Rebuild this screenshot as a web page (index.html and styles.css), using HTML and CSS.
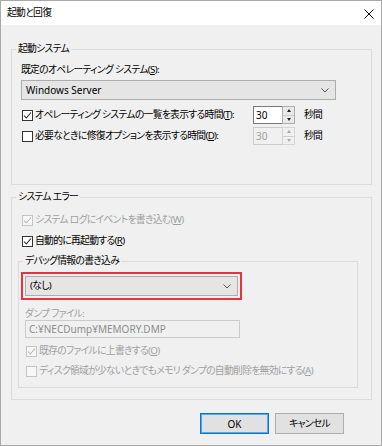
FILE: index.html
```html
<!DOCTYPE html>
<html lang="ja">
<head>
    <meta charset="UTF-8">
    <title>起動と回復</title>
    <link rel="stylesheet" href="styles.css">
</head>
<body>
    <div class="window">
        <div class="titlebar">
            <span class="title">起動と回復</span>
            <svg class="close" width="10" height="10" viewBox="0 0 10 10">
                <path d="M0.5 0.5 L9.5 9.5 M9.5 0.5 L0.5 9.5" stroke="#000" stroke-width="1" fill="none"/>
            </svg>
        </div>

        <div class="content">
            <fieldset class="group group-startup">
                <legend>起動システム</legend>
                <div class="label">既定のオペレーティング システム(<u>S</u>):</div>
                <div class="select select-os">
                    <span class="latin">Windows Server</span>
                    <svg width="8" height="5" viewBox="0 0 8 5"><path d="M0.5 0.5 L4 4 L7.5 0.5" stroke="#555" fill="none"/></svg>
                </div>

                <div class="row row-first">
                    <div class="check check-wide">
                        <span class="box"><svg width="9" height="9" viewBox="0 0 9 9"><path d="M1 4.5 L3.3 7 L8 1.5" stroke="#222" stroke-width="1.1" fill="none"/></svg></span>
                        オペレーティング システムの一覧を表示する時間(<u>T</u>):
                    </div>
                    <div class="spin">
                        <span class="spin-value latin">30</span>
                        <span class="spin-buttons"><span class="up"></span><span class="down"></span></span>
                    </div>
                    <span class="unit">秒間</span>
                </div>

                <div class="row">
                    <div class="check check-wide">
                        <span class="box"></span>
                        必要なときに修復オプションを表示する時間(<u>D</u>):
                    </div>
                    <div class="spin disabled">
                        <span class="spin-value latin">30</span>
                        <span class="spin-buttons"><span class="up"></span><span class="down"></span></span>
                    </div>
                    <span class="unit">秒間</span>
                </div>
            </fieldset>

            <fieldset class="group group-error">
                <legend>システム エラー</legend>
                <div class="check disabled">
                    <span class="box"><svg width="9" height="9" viewBox="0 0 9 9"><path d="M1 4.5 L3.3 7 L8 1.5" stroke="#b5b5b5" stroke-width="1.1" fill="none"/></svg></span>
                    システム ログにイベントを書き込む(<u>W</u>)
                </div>
                <div class="check check-restart">
                    <span class="box"><svg width="9" height="9" viewBox="0 0 9 9"><path d="M1 4.5 L3.3 7 L8 1.5" stroke="#222" stroke-width="1.1" fill="none"/></svg></span>
                    自動的に再起動する(<u>R</u>)
                </div>

                <fieldset class="group group-debug">
                    <legend>デバッグ情報の書き込み</legend>
                    <div class="highlight">
                        <div class="select">
                            <span>(なし)</span>
                            <svg width="8" height="5" viewBox="0 0 8 5"><path d="M0.5 0.5 L4 4 L7.5 0.5" stroke="#555" fill="none"/></svg>
                        </div>
                    </div>
                    <div class="label dump-label disabled">ダンプ ファイル:</div>
                    <div class="field latin">C:¥NECDump¥MEMORY.DMP</div>
                    <div class="check check-overwrite disabled">
                        <span class="box"><svg width="9" height="9" viewBox="0 0 9 9"><path d="M1 4.5 L3.3 7 L8 1.5" stroke="#b5b5b5" stroke-width="1.1" fill="none"/></svg></span>
                        既存のファイルに上書きする(<u>O</u>)
                    </div>
                    <div class="check check-disk disabled">
                        <span class="box"></span>
                        ディスク領域が少ないときでもメモリ ダンプの自動削除を無効にする(<u>A</u>)
                    </div>
                </fieldset>
            </fieldset>

            <div class="buttons">
                <div class="button button-default latin">OK</div>
                <div class="button">キャンセル</div>
            </div>
        </div>
    </div>
</body>
</html>
```

FILE: styles.css
```css
* {
    box-sizing: border-box;
}

body {
    margin: 0;
    font-family: "Noto Sans", "Noto Sans CJK JP", sans-serif;
    font-size: 9.8px;
    letter-spacing: -0.7px;
    line-height: 14px;
    color: #000;
    font-feature-settings: "palt";
}

.latin {
    font-size: 10px;
    letter-spacing: 0;
}

u {
    text-decoration-thickness: 1px;
    text-underline-offset: 1px;
}

.window {
    width: 382px;
    height: 446px;
    border: 1px solid #a9a9a9;
    background-color: #f0f0f0;
}

.titlebar {
    height: 24px;
    background-color: #fff;
    display: flex;
    align-items: center;
    justify-content: space-between;
    padding: 0 7px 0 6px;
}

.close {
    margin-top: 1px;
}

.content {
    padding: 18px 9px 0 10px;
}

.group {
    margin: 0;
    min-width: 0;
    border: 1px solid #dcdcdc;
}

.group legend {
    padding: 0 2px;
    line-height: 12px;
}

.group-startup {
    padding: 8px 9px 39px;
}

.group-startup legend {
    margin-left: -5px;
}

.group-error {
    margin-top: 6px;
    padding: 10px 13px 11px 6px;
}

.group-error legend {
    margin-left: -2px;
}

.group-debug {
    margin-top: 7px;
    padding: 5px 2px 9px;
}

.group-debug legend {
    margin-left: 2px;
}

.disabled {
    color: #a0a0a0;
}

.select {
    height: 20px;
    display: flex;
    align-items: center;
    justify-content: space-between;
    padding: 0 6px 0 4px;
    background-color: #e5e5e5;
    border: 1px solid #adadad;
}

.select-os {
    width: 315px;
    margin-top: 3px;
}

.row {
    display: flex;
    align-items: center;
    height: 18px;
    margin-top: 3px;
}

.row-first {
    margin-top: 6px;
}

.check {
    display: flex;
    align-items: center;
    height: 14px;
    margin-left: 4px;
    white-space: nowrap;
}

.check-wide {
    width: 231px;
    flex-shrink: 0;
    margin-left: 1px;
}

.box {
    width: 11px;
    height: 11px;
    margin-right: 2px;
    border: 1px solid #333;
    background-color: #fff;
    display: flex;
    align-items: center;
    justify-content: center;
    flex-shrink: 0;
}

.disabled .box {
    border-color: #c4c4c4;
    background-color: #f7f7f7;
}

.check-restart {
    margin-top: 7px;
}

.spin {
    display: flex;
    width: 42px;
    height: 18px;
}

.spin-value {
    flex: 1;
    background-color: #fff;
    border: 1px solid #7a7a7a;
    border-right: none;
    padding-left: 2px;
    line-height: 16px;
}

.spin-buttons {
    width: 13px;
    display: flex;
    flex-direction: column;
    border: 1px solid #adadad;
    background-color: #f0f0f0;
}

.spin-buttons span {
    flex: 1;
    display: flex;
    align-items: center;
    justify-content: center;
    background-color: #e9e9e9;
}

.spin-buttons .up {
    border-bottom: 1px solid #cfcfcf;
}

.spin-buttons span::after {
    content: "";
    border-left: 2.5px solid transparent;
    border-right: 2.5px solid transparent;
}

.spin-buttons .up::after {
    border-bottom: 3px solid #222;
}

.spin-buttons .down::after {
    border-top: 3px solid #222;
}

.spin.disabled .spin-value {
    background-color: #f0f0f0;
    border-color: #cccccc;
}

.spin.disabled .spin-buttons {
    border-color: #d5d5d5;
}

.spin.disabled .spin-buttons span {
    background-color: #f0f0f0;
}

.spin.disabled .up::after {
    border-bottom-color: #a8a8a8;
}

.spin.disabled .down::after {
    border-top-color: #a8a8a8;
}

.unit {
    margin-left: 9px;
}

.highlight {
    width: 221px;
    border: 2px solid #e8323c;
    padding: 2px;
}

.dump-label {
    margin: 8px 0 0 4px;
    line-height: 12px;
}

.field {
    width: 215px;
    height: 18px;
    margin-left: 4px;
    padding-left: 3px;
    border: 1px solid #cccccc;
    color: #8d8d8d;
    line-height: 16px;
}

.check-overwrite {
    margin: 6px 0 0 5px;
}

.check-disk {
    margin: 6px 0 0 5px;
}

.buttons {
    display: flex;
    justify-content: flex-end;
    gap: 6px;
    padding: 13px 28px 0 0;
}

.button {
    width: 69px;
    height: 21px;
    display: flex;
    align-items: center;
    justify-content: center;
    background-color: #e1e1e1;
    border: 1px solid #adadad;
}

.button-default {
    border-color: #0078d7;
    box-shadow: inset 0 0 0 1px #5aa6e6;
}
```
